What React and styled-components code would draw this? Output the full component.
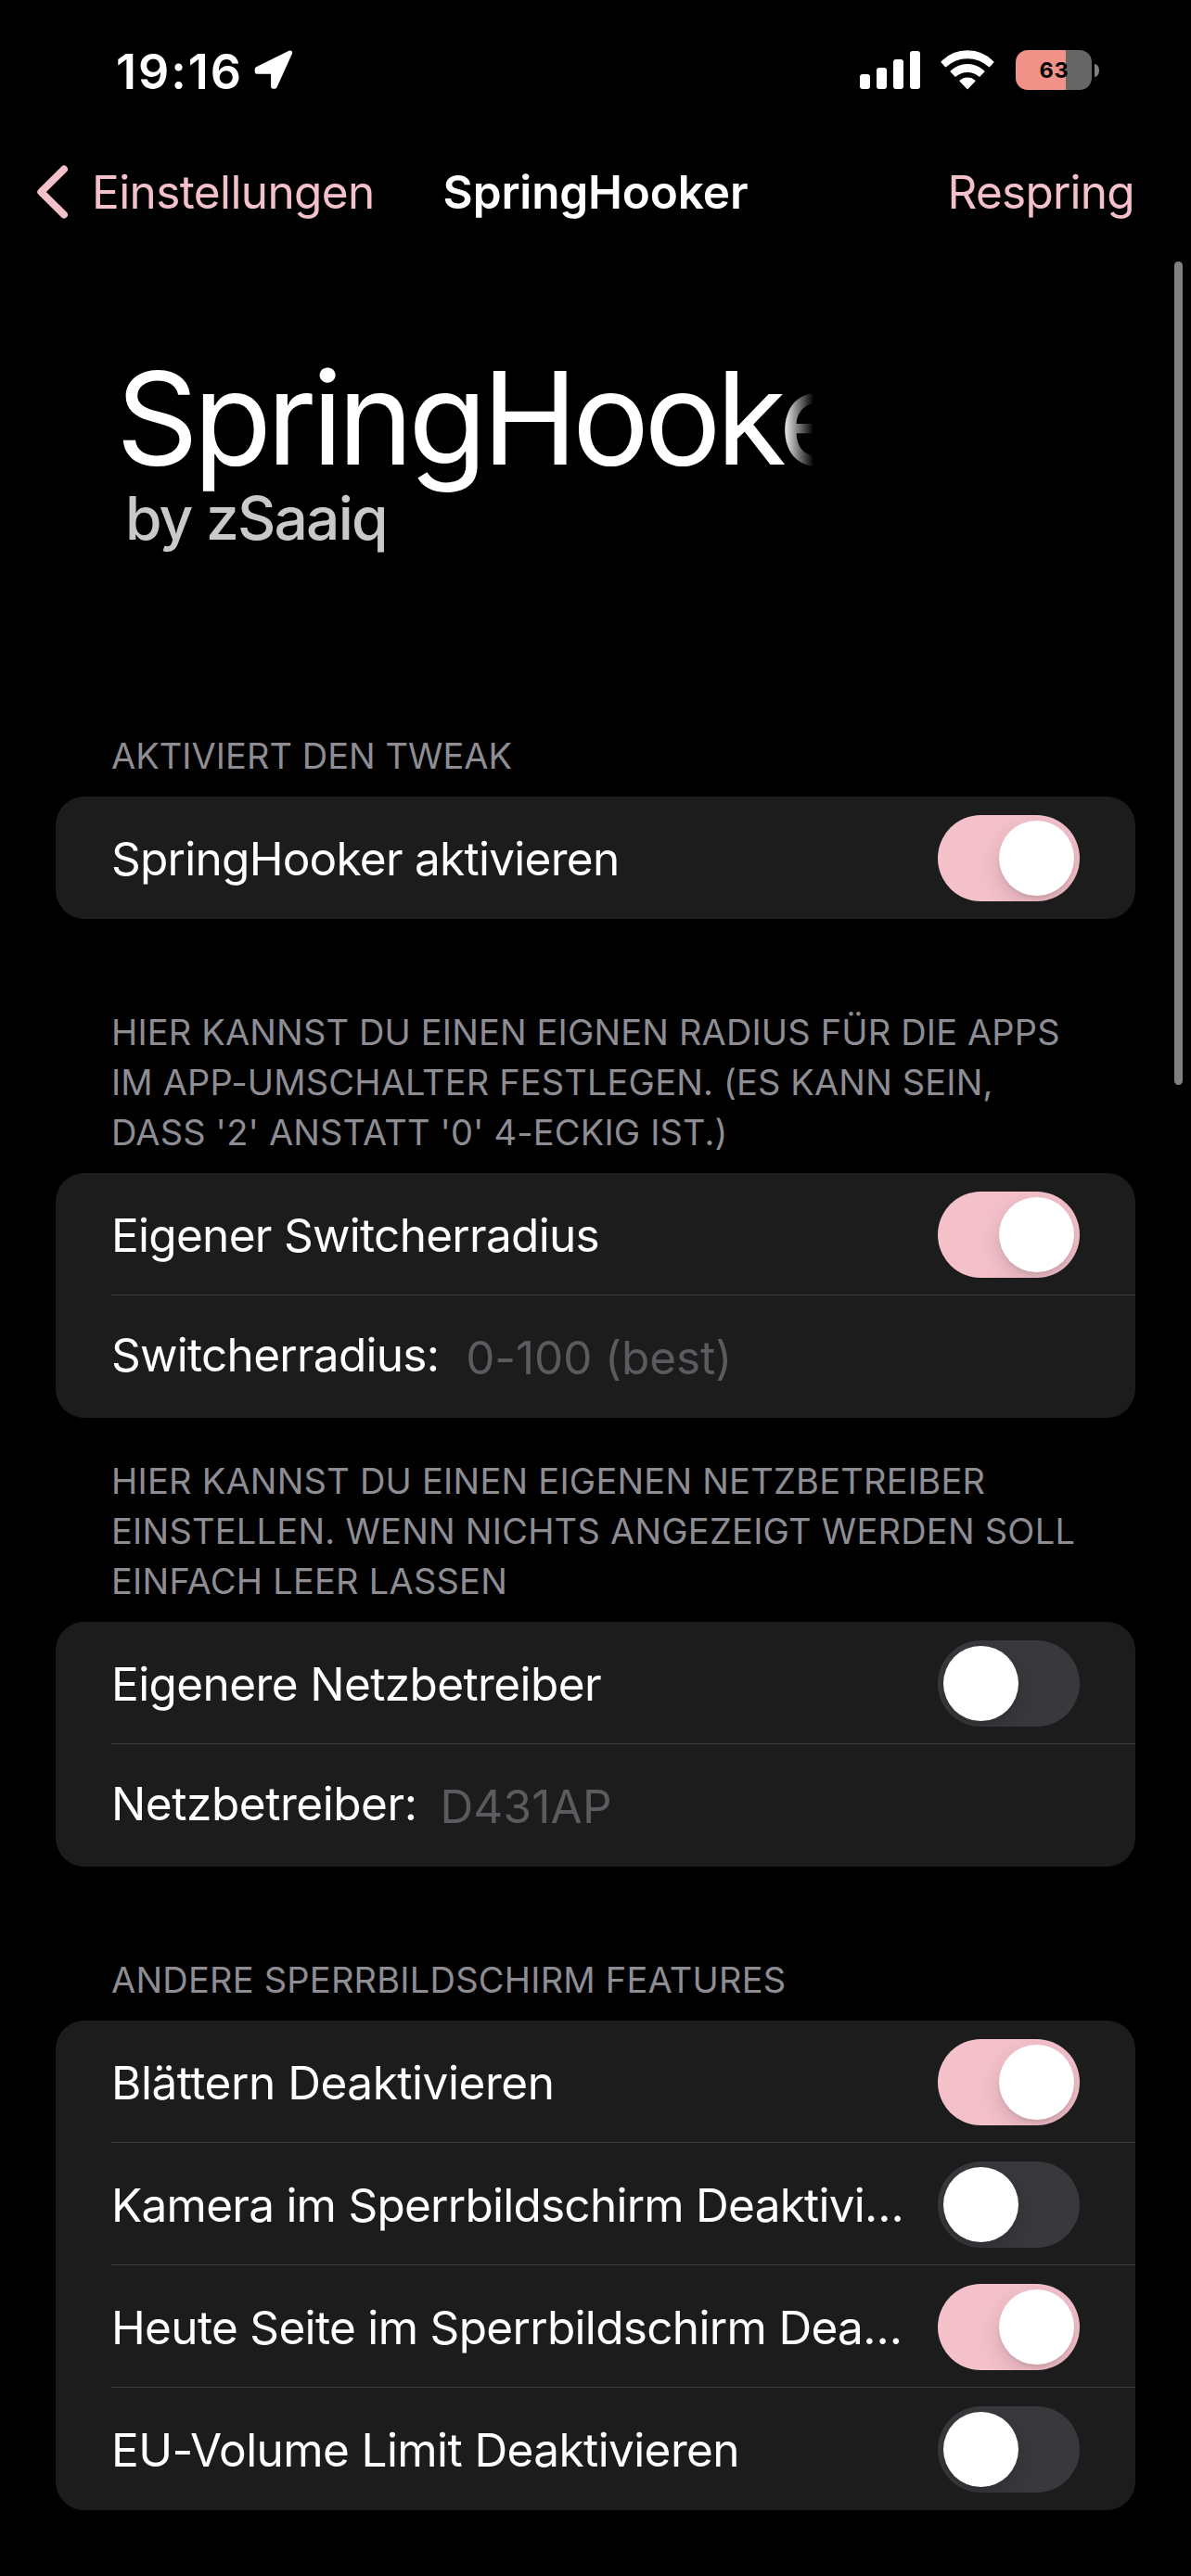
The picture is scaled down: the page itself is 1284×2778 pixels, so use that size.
import React, { useState } from "react";
import styled, { createGlobalStyle } from "styled-components";

const PINK = "#f4c1cb";

const GlobalStyle = createGlobalStyle`
  *, *::before, *::after { box-sizing: border-box; }
  html, body { margin: 0; padding: 0; background: #000; }
  body { font-family: Inter, "Liberation Sans", sans-serif; color: #fff; }
`;

const Screen = styled.div`
  position: relative;
  display: flex;
  flex-direction: column;
  width: 1284px;
  height: 2778px;
  overflow: hidden;
  background: #000;
`;

const StatusBar = styled.header`
  display: flex;
  align-items: center;
  justify-content: space-between;
  height: 151px;
  padding: 0 99px 0 125px;
  flex: none;
`;

const StatusLeft = styled.div`
  display: flex;
  align-items: center;
  gap: 14px;
`;

const Clock = styled.time`
  padding-top: 4px;
  font-size: 52px;
  font-weight: 600;
  line-height: 63px;
  letter-spacing: 2px;
  margin-right: -2px;
`;

const StatusRight = styled.div`
  display: flex;
  align-items: center;
  gap: 21px;
`;

const Battery = styled.div`
  display: flex;
  align-items: center;
  gap: 3px;
  padding-left: 1px;
`;

const BatteryBody = styled.div`
  display: flex;
  align-items: center;
  justify-content: center;
  width: 82px;
  height: 43px;
  padding-left: 1px;
  border-radius: 13px;
  color: #000;
  font-size: 23.5px;
  font-weight: 700;
  line-height: 28px;
  letter-spacing: 0.8px;
  background: linear-gradient(90deg, #f09287 ${(p) => p.$level}px, #666 ${(p) => p.$level}px);
`;

const BatteryNub = styled.div`
  width: 5px;
  height: 14px;
  border-radius: 0 5px 5px 0 / 0 7px 7px 0;
  background: #808080;
`;

const NavBar = styled.nav`
  display: grid;
  grid-template-columns: 1fr auto 1fr;
  align-items: center;
  height: 112px;
  padding: 0 37px;
  flex: none;
  font-size: 49.5px;
  line-height: 60px;
`;

const NavButton = styled.button`
  display: flex;
  align-items: center;
  gap: 23px;
  justify-self: ${(p) => (p.$end ? "end" : "start")};
  padding: 0 ${(p) => (p.$end ? 24 : 0)}px 0 0;
  border: 0;
  background: none;
  color: ${PINK};
  font: inherit;
  letter-spacing: ${(p) => p.$tracking}px;
`;

const NavTitle = styled.h1`
  margin: 0;
  font-size: inherit;
  font-weight: 600;
  letter-spacing: -0.15px;
`;

const Hero = styled.section`
  display: flex;
  flex-direction: column;
  flex: none;
  height: 525px;
  padding: 104px 0 0 125px;
`;

const HeroTitle = styled.div`
  width: 752px;
  overflow: hidden;
  white-space: nowrap;
  font-size: 138.5px;
  line-height: 167px;
  letter-spacing: -5.6px;
  mask-image: linear-gradient(90deg, #000 718px, transparent 752px);
`;

const HeroAuthor = styled.div`
  margin: -14px 0 0 10px;
  color: #c9c9c9;
  font-size: 64px;
  font-weight: 500;
  line-height: 77px;
  letter-spacing: -1.77px;
`;

const Group = styled.section`
  flex: none;
  margin: 0 60px ${(p) => p.$after}px;
`;

const GroupHeader = styled.h2`
  margin: 0;
  padding: 0 60px 17px;
  color: #8d8d93;
  font-size: 38px;
  font-weight: 400;
  line-height: 54px;
  letter-spacing: ${(p) => p.$tracking}px;
  text-transform: uppercase;
`;

const Card = styled.div`
  padding-left: 60px;
  border-radius: 31px;
  background: #1c1c1d;
`;

const Row = styled.div`
  display: flex;
  align-items: ${(p) => (p.$field ? "flex-start" : "center")};
  gap: ${(p) => p.$gap ?? 34}px;
  height: 132px;
  padding: ${(p) => (p.$field ? "34px" : "2px")} 60px 0 0;
  border-bottom: 1px solid #3d3d3f;
  font-size: 49.5px;
  line-height: 60px;

  &:last-child {
    border-bottom-color: transparent;
  }
`;

const Label = styled.span`
  flex: ${(p) => (p.$fit ? "none" : "1")};
  min-width: 0;
  padding-top: ${(p) => (p.$fit ? 0 : 1)}px;
  overflow: hidden;
  text-overflow: ellipsis;
  white-space: nowrap;
  letter-spacing: ${(p) => p.$tracking}px;
`;

const Placeholder = styled.span`
  padding-top: 3px;
  color: #5b5a5f;
  letter-spacing: ${(p) => p.$tracking}px;
`;

const Track = styled.button`
  display: flex;
  flex: none;
  justify-content: ${(p) => (p.$on ? "flex-end" : "flex-start")};
  width: 153px;
  height: 93px;
  padding: 6px;
  border: 0;
  border-radius: 47px;
  overflow: hidden;
  background: ${(p) => (p.$on ? PINK : "#39393d")};
`;

const Thumb = styled.span`
  width: 81px;
  height: 81px;
  border-radius: 50%;
  background: #fff;
  box-shadow: 0 9px 24px rgba(0, 0, 0, 0.15), 0 3px 3px rgba(0, 0, 0, 0.06);
`;

const ScrollIndicator = styled.div`
  position: absolute;
  top: 282px;
  right: 9px;
  width: 9px;
  height: 888px;
  border-radius: 5px;
  background: #808080;
`;

const LocationIcon = () => (
  <svg width="42" height="43" viewBox="0 0 42 43">
    <path
      d="M38.6 3 3.2 20.4V23.2H20.6V39.2H22.2Z"
      fill="#fff"
      stroke="#fff"
      strokeWidth="5"
      strokeLinejoin="round"
    />
  </svg>
);

const SignalIcon = () => (
  <svg width="65" height="43" viewBox="0 0 65 43" fill="#fff">
    <rect x="0" y="26" width="11" height="16" rx="3" />
    <rect x="18" y="19" width="11" height="23" rx="3" />
    <rect x="36" y="10" width="11" height="32" rx="3" />
    <rect x="54" y="1" width="11" height="41" rx="3" />
  </svg>
);

const WifiIcon = () => (
  <svg width="60" height="43" viewBox="0 0 60 43" fill="#fff" stroke="#fff" strokeWidth="1.2" strokeLinejoin="round">
    <path d="M2 12.9A38.7 38.7 0 0 1 58 12.9L53.5 17.8A34.6 34.6 0 0 0 6.5 17.8Z" />
    <path d="M12.1 23A25.4 25.4 0 0 1 47.9 23L43.1 28.2A19.9 19.9 0 0 0 16.9 28.2Z" />
    <path d="M22 33.3A11.5 11.5 0 0 1 38 33.3L30 41.6Z" />
  </svg>
);

const ChevronIcon = () => (
  <svg width="39" height="60" viewBox="0 0 39 60" fill="none">
    <path d="M32 5.5 7.3 30 32 54.5" stroke={PINK} strokeWidth="8" strokeLinecap="round" strokeLinejoin="round" />
  </svg>
);

function Switch({ initial }) {
  const [on, setOn] = useState(initial);
  return (
    <Track type="button" role="switch" aria-checked={on} $on={on} onClick={() => setOn(!on)}>
      <Thumb />
    </Track>
  );
}

const groups = [
  {
    header: "Aktiviert den Tweak",
    tracking: 0.03,
    after: 95,
    rows: [{ label: "SpringHooker aktivieren", tracking: -0.74, on: true }],
  },
  {
    header: "Hier kannst du einen eignen Radius für die Apps im App-Umschalter festlegen. (Es kann sein, dass '2' anstatt '0' 4-eckig ist.)",
    tracking: 0.16,
    after: 41,
    rows: [
      { label: "Eigener Switcherradius", tracking: -0.71, on: true },
      { label: "Switcherradius:", tracking: -0.73, gap: 29, placeholder: "0-100 (best)", placeholderTracking: -0.1 },
    ],
  },
  {
    header: "Hier kannst du einen eigenen Netzbetreiber einstellen. Wenn nichts angezeigt werden soll einfach leer lassen",
    tracking: 0.24,
    after: 95,
    rows: [
      { label: "Eigenere Netzbetreiber", tracking: -0.6, on: false },
      { label: "Netzbetreiber:", tracking: -0.45, gap: 25, placeholder: "D431AP", placeholderTracking: 0.17 },
    ],
  },
  {
    header: "Andere Sperrbildschirm Features",
    tracking: 0.23,
    after: 0,
    rows: [
      { label: "Blättern Deaktivieren", tracking: -0.46, on: true },
      { label: "Kamera im Sperrbildschirm Deaktivieren", tracking: -0.75, on: false },
      { label: "Heute Seite im Sperrbildschirm Deaktivieren", tracking: -0.68, on: true },
      { label: "EU-Volume Limit Deaktivieren", tracking: -0.6, on: false },
    ],
  },
];

function SettingRow({ row }) {
  if (row.placeholder) {
    return (
      <Row $field $gap={row.gap}>
        <Label $fit $tracking={row.tracking}>{row.label}</Label>
        <Placeholder $tracking={row.placeholderTracking}>{row.placeholder}</Placeholder>
      </Row>
    );
  }
  return (
    <Row>
      <Label $tracking={row.tracking}>{row.label}</Label>
      <Switch initial={row.on} />
    </Row>
  );
}

export default function App() {
  return (
    <>
      <GlobalStyle />
      <Screen>
        <StatusBar>
          <StatusLeft>
            <Clock>19:16</Clock>
            <LocationIcon />
          </StatusLeft>
          <StatusRight>
            <SignalIcon />
            <WifiIcon />
            <Battery>
              <BatteryBody $level={54}>63</BatteryBody>
              <BatteryNub />
            </Battery>
          </StatusRight>
        </StatusBar>
        <NavBar>
          <NavButton type="button" $tracking={-0.61}>
            <ChevronIcon />
            Einstellungen
          </NavButton>
          <NavTitle>SpringHooker</NavTitle>
          <NavButton type="button" $end $tracking={-0.74}>Respring</NavButton>
        </NavBar>
        <Hero>
          <HeroTitle>SpringHooker</HeroTitle>
          <HeroAuthor>by zSaaiq</HeroAuthor>
        </Hero>
        {groups.map((group) => (
          <Group key={group.header} $after={group.after}>
            <GroupHeader $tracking={group.tracking}>{group.header}</GroupHeader>
            <Card>
              {group.rows.map((row) => (
                <SettingRow key={row.label} row={row} />
              ))}
            </Card>
          </Group>
        ))}
        <ScrollIndicator />
      </Screen>
    </>
  );
}
